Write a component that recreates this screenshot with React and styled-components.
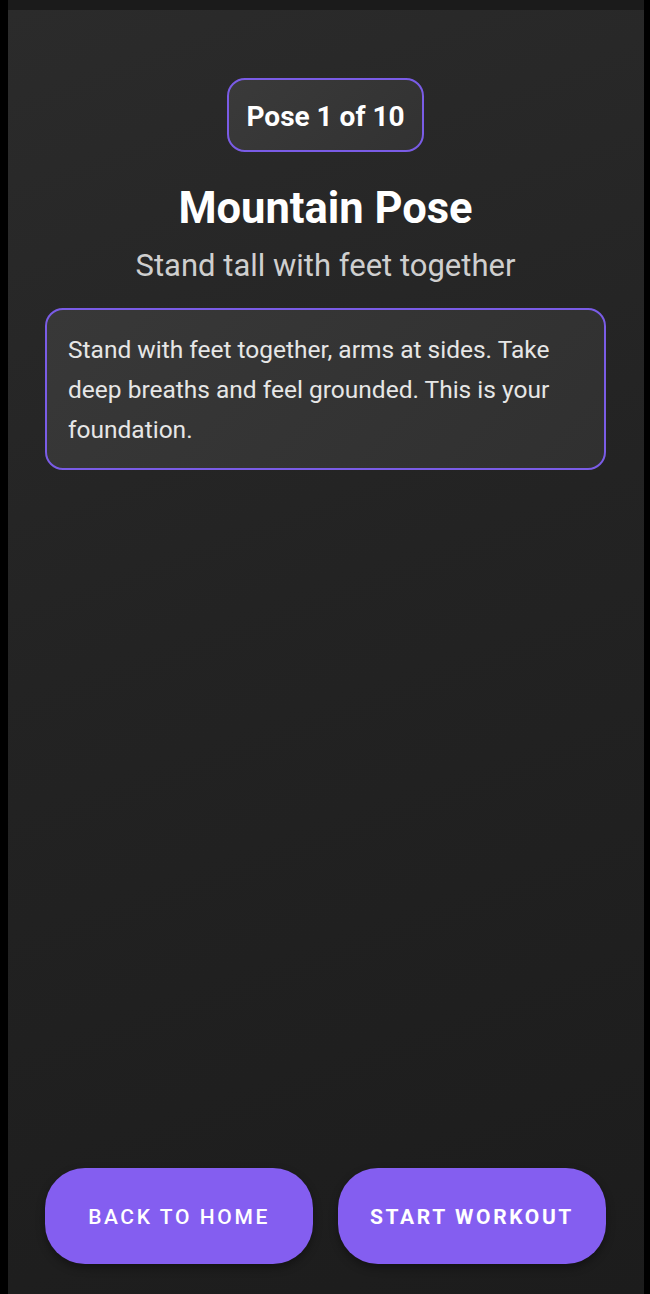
import React from "react";
import styled, { createGlobalStyle } from "styled-components";

const Global = createGlobalStyle`
  html, body { margin: 0; padding: 0; background: #000; }
  body { font-family: Roboto, "Noto Sans", sans-serif; }
  * { box-sizing: border-box; }
`;

const Frame = styled.div`
  margin-left: 8px;
  width: 636px;
  height: 1294px;
  display: flex;
  flex-direction: column;
`;

const StatusStrip = styled.div`
  height: 10px;
  background: #1b1b1b;
  flex-shrink: 0;
`;

const Screen = styled.main`
  flex: 1;
  display: flex;
  flex-direction: column;
  align-items: center;
  padding: 68px 38px 30px 37px;
  background: linear-gradient(160deg, #2b2b2b 0%, #232323 45%, #1c1c1c 100%);
`;

const Badge = styled.div`
  height: 74px;
  padding: 3px 17px 0;
  display: flex;
  align-items: center;
  border: 2px solid #7a5ce6;
  border-radius: 18px;
  background: linear-gradient(135deg, #3a3a3a, #323232);
  color: #fff;
  font-size: 28px;
  font-weight: 700;
`;

const Title = styled.h1`
  margin: 31px 0 0;
  font-size: 43.5px;
  line-height: 52px;
  font-weight: 700;
  color: #fff;
`;

const Subtitle = styled.p`
  margin: 11px 0 0;
  font-size: 31px;
  line-height: 40px;
  color: #cfcfcf;
`;

const Card = styled.div`
  align-self: stretch;
  margin-top: 22px;
  padding: 20px 22px 18px 21px;
  border: 2px solid #7a5ce6;
  border-radius: 18px;
  background: linear-gradient(135deg, #383838, #303030);
  color: #e6e6e6;
  font-size: 24.5px;
  line-height: 40px;
`;

const Spacer = styled.div`
  flex: 1;
`;

const Actions = styled.div`
  align-self: stretch;
  display: grid;
  grid-template-columns: 1fr 1fr;
  gap: 25px;
`;

const Button = styled.button`
  height: 96px;
  padding: 2px 0 0;
  border: none;
  border-radius: 40px;
  background: #845ef0;
  color: #fff;
  font-family: Roboto, "Noto Sans", sans-serif;
  font-size: 21px;
  font-weight: ${(p) => (p.$strong ? 700 : 500)};
  letter-spacing: 2.6px;
  text-transform: uppercase;
  box-shadow: 0 4px 8px rgba(0, 0, 0, 0.35);
`;

export default function App() {
  return (
    <>
      <Global />
      <Frame>
        <StatusStrip />
        <Screen>
          <Badge>Pose 1 of 10</Badge>
          <Title>Mountain Pose</Title>
          <Subtitle>Stand tall with feet together</Subtitle>
          <Card>
            Stand with feet together, arms at sides. Take deep breaths and feel
            grounded. This is your foundation.
          </Card>
          <Spacer />
          <Actions>
            <Button>Back to Home</Button>
            <Button $strong>Start Workout</Button>
          </Actions>
        </Screen>
      </Frame>
    </>
  );
}
